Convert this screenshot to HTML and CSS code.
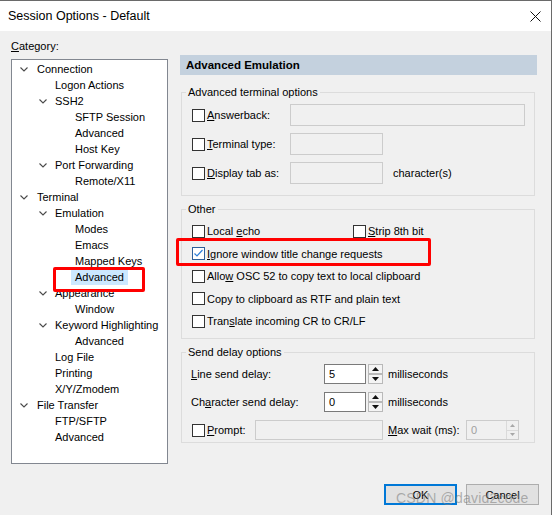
FILE: index.html
```html
<!DOCTYPE html>
<html>
<head>
<meta charset="utf-8">
<link rel="stylesheet" href="styles.css">
</head>
<body>
<div class="window">
  <div class="titlebar">
    <span class="title">Session Options - Default</span>
    <svg class="close" width="11" height="11" viewBox="0 0 11 11"><path d="M0.5 0.5 L10.5 10.5 M10.5 0.5 L0.5 10.5" stroke="#111" stroke-width="1" fill="none"/></svg>
  </div>
  <div class="content">
    <div class="main">
      <div class="left">
        <div class="cat-label"><u>C</u>ategory:</div>
        <div class="tree">
          <div class="node l0"><span class="slot"><svg width="8" height="5" viewBox="0 0 8 5"><polyline points="0.5,0.5 4,4 7.5,0.5" fill="none" stroke="#4a4a4a" stroke-width="1.1"/></svg></span><span class="txt">Connection</span></div>
          <div class="node l1"><span class="slot"></span><span class="txt">Logon Actions</span></div>
          <div class="node l1"><span class="slot"><svg width="8" height="5" viewBox="0 0 8 5"><polyline points="0.5,0.5 4,4 7.5,0.5" fill="none" stroke="#4a4a4a" stroke-width="1.1"/></svg></span><span class="txt">SSH2</span></div>
          <div class="node l2"><span class="slot"></span><span class="txt">SFTP Session</span></div>
          <div class="node l2"><span class="slot"></span><span class="txt">Advanced</span></div>
          <div class="node l2"><span class="slot"></span><span class="txt">Host Key</span></div>
          <div class="node l1"><span class="slot"><svg width="8" height="5" viewBox="0 0 8 5"><polyline points="0.5,0.5 4,4 7.5,0.5" fill="none" stroke="#4a4a4a" stroke-width="1.1"/></svg></span><span class="txt">Port Forwarding</span></div>
          <div class="node l2"><span class="slot"></span><span class="txt">Remote/X11</span></div>
          <div class="node l0"><span class="slot"><svg width="8" height="5" viewBox="0 0 8 5"><polyline points="0.5,0.5 4,4 7.5,0.5" fill="none" stroke="#4a4a4a" stroke-width="1.1"/></svg></span><span class="txt">Terminal</span></div>
          <div class="node l1"><span class="slot"><svg width="8" height="5" viewBox="0 0 8 5"><polyline points="0.5,0.5 4,4 7.5,0.5" fill="none" stroke="#4a4a4a" stroke-width="1.1"/></svg></span><span class="txt">Emulation</span></div>
          <div class="node l2"><span class="slot"></span><span class="txt">Modes</span></div>
          <div class="node l2"><span class="slot"></span><span class="txt">Emacs</span></div>
          <div class="node l2"><span class="slot"></span><span class="txt">Mapped Keys</span></div>
          <div class="node l2"><span class="slot"></span><span class="txt sel">Advanced</span></div>
          <div class="node l1"><span class="slot"><svg width="8" height="5" viewBox="0 0 8 5"><polyline points="0.5,0.5 4,4 7.5,0.5" fill="none" stroke="#4a4a4a" stroke-width="1.1"/></svg></span><span class="txt">Appearance</span></div>
          <div class="node l2"><span class="slot"></span><span class="txt">Window</span></div>
          <div class="node l1"><span class="slot"><svg width="8" height="5" viewBox="0 0 8 5"><polyline points="0.5,0.5 4,4 7.5,0.5" fill="none" stroke="#4a4a4a" stroke-width="1.1"/></svg></span><span class="txt">Keyword Highlighting</span></div>
          <div class="node l2"><span class="slot"></span><span class="txt">Advanced</span></div>
          <div class="node l1"><span class="slot"></span><span class="txt">Log File</span></div>
          <div class="node l1"><span class="slot"></span><span class="txt">Printing</span></div>
          <div class="node l1"><span class="slot"></span><span class="txt">X/Y/Zmodem</span></div>
          <div class="node l0"><span class="slot"><svg width="8" height="5" viewBox="0 0 8 5"><polyline points="0.5,0.5 4,4 7.5,0.5" fill="none" stroke="#4a4a4a" stroke-width="1.1"/></svg></span><span class="txt">File Transfer</span></div>
          <div class="node l1"><span class="slot"></span><span class="txt">FTP/SFTP</span></div>
          <div class="node l1"><span class="slot"></span><span class="txt">Advanced</span></div>
        </div>
      </div>
      <div class="right">
        <div class="header">Advanced Emulation</div>

        <fieldset class="group g1">
          <legend>Advanced terminal options</legend>
          <div class="row r1">
            <label class="cb w98"><span class="box"></span><span><u>A</u>nswerback:</span></label>
            <span class="tb tb-wide"></span>
          </div>
          <div class="row r1 gap7">
            <label class="cb w98"><span class="box"></span><span><u>T</u>erminal type:</span></label>
            <span class="tb tb-short"></span>
          </div>
          <div class="row r1 gap7">
            <label class="cb w98"><span class="box"></span><span><u>D</u>isplay tab as:</span></label>
            <span class="tb tb-short"></span>
            <span class="unit">character(s)</span>
          </div>
        </fieldset>

        <fieldset class="group g2">
          <legend>Other</legend>
          <div class="row r2">
            <label class="cb w161"><span class="box"></span><span>Local <u>e</u>cho</span></label>
            <label class="cb"><span class="box"></span><span><u>S</u>trip 8th bit</span></label>
          </div>
          <div class="row r2">
            <label class="cb"><span class="box checked"><svg width="11" height="11" viewBox="0 0 11 11"><polyline points="1.5,5.5 4,8 9.5,2" fill="none" stroke="#2f7fd8" stroke-width="1.2"/></svg></span><span><u>I</u>gnore window title change requests</span></label>
          </div>
          <div class="row r2">
            <label class="cb"><span class="box"></span><span>Allo<u>w</u> OSC 52 to copy text to local clipboard</span></label>
          </div>
          <div class="row r2">
            <label class="cb"><span class="box"></span><span>Copy to clipboard as RTF and plain text</span></label>
          </div>
          <div class="row r2">
            <label class="cb"><span class="box"></span><span>Tran<u>s</u>late incoming CR to CR/LF</span></label>
          </div>
        </fieldset>

        <fieldset class="group g3">
          <legend>Send delay options</legend>
          <div class="row r3">
            <span class="dlabel"><u>L</u>ine send delay:</span>
            <span class="spin">
              <span class="spin-input">5</span>
              <span class="spin-btns">
                <span class="sbtn"><svg width="7" height="4" viewBox="0 0 7 4"><polygon points="0,4 3.5,0 7,4" fill="#111"/></svg></span>
                <span class="sbtn"><svg width="7" height="4" viewBox="0 0 7 4"><polygon points="0,0 7,0 3.5,4" fill="#111"/></svg></span>
              </span>
            </span>
            <span class="unit2">milliseconds</span>
          </div>
          <div class="row r3 gap8">
            <span class="dlabel">Ch<u>a</u>racter send delay:</span>
            <span class="spin">
              <span class="spin-input">0</span>
              <span class="spin-btns">
                <span class="sbtn"><svg width="7" height="4" viewBox="0 0 7 4"><polygon points="0,4 3.5,0 7,4" fill="#111"/></svg></span>
                <span class="sbtn"><svg width="7" height="4" viewBox="0 0 7 4"><polygon points="0,0 7,0 3.5,4" fill="#111"/></svg></span>
              </span>
            </span>
            <span class="unit2">milliseconds</span>
          </div>
          <div class="row r3 gap8">
            <label class="cb w63"><span class="box"></span><span><u>P</u>rompt:</span></label>
            <span class="tb tb-prompt"></span>
            <span class="maxw"><u>M</u>ax wait (ms):</span>
            <span class="dspin">
              <span class="dspin-val">0</span>
              <span class="dspin-btns">
                <span class="dbtn"><svg width="5" height="3" viewBox="0 0 5 3"><polygon points="0,3 2.5,0 5,3" fill="#a8a8a8"/></svg></span>
                <span class="dbtn"><svg width="5" height="3" viewBox="0 0 5 3"><polygon points="0,0 5,0 2.5,3" fill="#a8a8a8"/></svg></span>
              </span>
            </span>
          </div>
        </fieldset>
      </div>
    </div>
    <div class="footer">
      <button class="btn ok">OK</button>
      <button class="btn">Cancel</button>
    </div>
  </div>

  <div class="mark mark-tree"></div>
  <div class="mark mark-ignore"></div>
  <div class="watermark">CSDN @david2code</div>
</div>
</body>
</html>
```

FILE: styles.css
```css
html, body {
  margin: 0;
  padding: 0;
  background: #ffffff;
}

body {
  font-family: "Liberation Sans", Arial, sans-serif;
  font-size: 11px;
  color: #000;
}

.window {
  position: relative;
  width: 551px;
  height: 514px;
  background: #f0f0f0;
  border-top: 1px solid #6a6a6a;
  border-right: 1px solid #6a6a6a;
  overflow: hidden;
}

.titlebar {
  height: 30px;
  background: #ffffff;
  display: flex;
  align-items: center;
  justify-content: space-between;
  padding: 0 10px 0 8px;
  font-size: 12.5px;
}

.title {
  line-height: 16px;
}

.close {
  display: block;
}

.content {
  padding-left: 11px;
}

.main {
  display: flex;
  align-items: flex-start;
  gap: 12px;
}

.left {
  width: 157px;
  padding-top: 9px;
}

.cat-label {
  line-height: 13px;
  margin-bottom: 6px;
}

.tree {
  height: 405px;
  box-sizing: border-box;
  border: 1px solid #828790;
  background: #ffffff;
  padding-top: 1px;
}

.node {
  height: 16px;
  display: flex;
  align-items: center;
  white-space: nowrap;
}

.l0 { padding-left: 8px; }
.l1 { padding-left: 26px; }
.l2 { padding-left: 46px; }

.slot {
  width: 17px;
  flex: none;
  display: flex;
  align-items: center;
}

.l1 .slot svg { margin-left: 1px; }

.slot svg { display: block; }

.txt {
  line-height: 15px;
}

.txt.sel {
  background: #cce8ff;
  margin-left: -4px;
  padding: 0 4px;
}

.right {
  width: 357px;
  padding-top: 24px;
}

.header {
  height: 20px;
  line-height: 20px;
  background: #c4d1de;
  font-weight: bold;
  font-size: 11.5px;
  padding-left: 6px;
}

.group {
  margin: 11px 2px 0 1px;
  border: 1px solid #dcdcdc;
  padding: 5px 0 11px 10px;
  min-width: 0;
}

.group legend {
  padding: 0 2px;
  margin-left: -6px;
  line-height: 13px;
}

.g2 {
  margin-top: 7px;
  padding: 4px 0 5.5px 10px;
}

.g3 {
  margin-top: 7px;
  padding: 5px 0 2px 10px;
}

.row {
  display: flex;
  align-items: center;
  white-space: nowrap;
}

.r1 { height: 22px; }
.r2 { height: 22.5px; }
.r3 { height: 20px; }
.gap7 { margin-top: 7px; }
.gap8 { margin-top: 8px; }

.cb {
  display: flex;
  align-items: center;
}

.w98 { width: 98px; }
.w161 { width: 161px; }
.w63 { width: 63px; flex: none; }

.box {
  width: 13px;
  height: 13px;
  box-sizing: border-box;
  border: 1px solid #333333;
  background: #ffffff;
  margin-right: 2px;
  flex: none;
  display: flex;
  align-items: center;
  justify-content: center;
}

.box.checked {
  border-color: #2d5f9a;
}

.box svg { display: block; }

.tb {
  display: block;
  height: 22px;
  box-sizing: border-box;
  border: 1px solid #cccccc;
  background: #f0f0f0;
}

.tb-wide { width: 235px; }
.tb-short { width: 93px; }
.tb-prompt { width: 128px; height: 20px; }

.unit { margin-left: 10px; }

.dlabel {
  width: 133px;
  margin-left: -1px;
}

.spin {
  display: flex;
  gap: 2px;
}

.spin-input {
  width: 42px;
  height: 20px;
  box-sizing: border-box;
  border: 1px solid #7a7a7a;
  background: #ffffff;
  padding-left: 4px;
  line-height: 18px;
}

.spin-btns {
  width: 15px;
  display: flex;
  flex-direction: column;
}

.sbtn {
  height: 10px;
  box-sizing: border-box;
  border: 1px solid #b9b9b9;
  background: #f4f4f4;
  display: flex;
  align-items: center;
  justify-content: center;
}

.sbtn svg { display: block; }

.unit2 { margin-left: 5px; }

.maxw {
  margin-left: 5px;
  width: 78px;
}

.dspin {
  width: 53px;
  height: 20px;
  box-sizing: border-box;
  border: 1px solid #cccccc;
  display: flex;
  justify-content: space-between;
}

.dspin-val {
  color: #a0a0a0;
  padding-left: 4px;
  line-height: 18px;
}

.dspin-btns {
  width: 11px;
  display: flex;
  flex-direction: column;
  border-left: 1px solid #dadada;
}

.dbtn {
  flex: 1;
  display: flex;
  align-items: center;
  justify-content: center;
}

.dbtn + .dbtn { border-top: 1px solid #dadada; }
.dbtn svg { display: block; }

.footer {
  margin-top: 20px;
  display: flex;
  justify-content: flex-end;
  gap: 9px;
  padding-right: 12px;
}

.btn {
  width: 73px;
  height: 21px;
  box-sizing: border-box;
  border: 1px solid #adadad;
  background: #e1e1e1;
  font-family: "Liberation Sans", Arial, sans-serif;
  font-size: 11px;
  color: #000;
  padding: 0;
}

.btn.ok {
  border: 2px solid #0078d7;
}

.mark {
  position: absolute;
  border: 3px solid #ff0000;
  border-radius: 2px;
  box-sizing: border-box;
}

.mark-tree {
  left: 53px;
  top: 266px;
  width: 92px;
  height: 25px;
}

.mark-ignore {
  left: 176px;
  top: 237px;
  width: 255px;
  height: 28px;
}

.watermark {
  position: absolute;
  left: 396px;
  top: 489px;
  font-size: 14px;
  color: rgba(130, 130, 130, 0.6);
  white-space: nowrap;
  letter-spacing: 0.2px;
}
```
